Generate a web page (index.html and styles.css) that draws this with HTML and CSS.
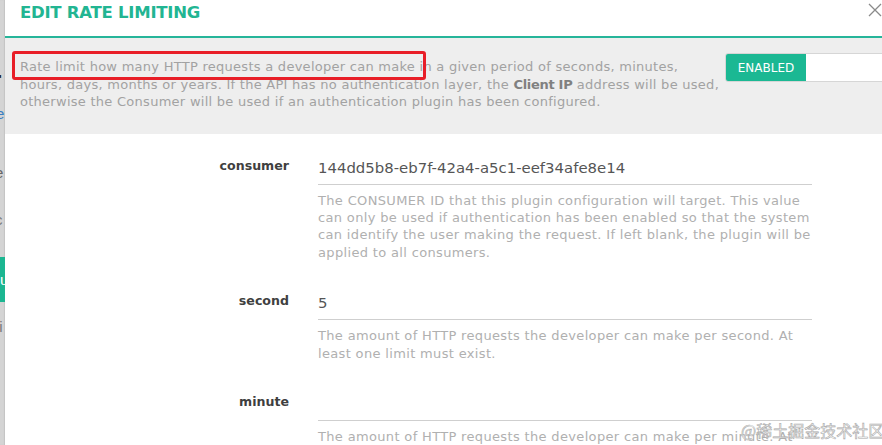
FILE: index.html
```html
<!DOCTYPE html>
<html lang="en">
<head>
<meta charset="utf-8">
<title>Edit Rate Limiting</title>
<link rel="stylesheet" href="styles.css">
</head>
<body>
<div class="page">
  <div class="backdrop">
    <span class="frag frag-r">r</span>
    <span class="frag frag-e1">e</span>
    <span class="frag frag-e2">e</span>
    <span class="frag frag-c">c</span>
    <span class="frag frag-btn">u</span>
    <span class="frag frag-li">li</span>
  </div>
  <div class="modal">
    <div class="modal-header">
      <h1 class="modal-title">EDIT RATE LIMITING</h1>
      <button class="close" aria-label="Close">
        <svg width="14" height="14" viewBox="0 0 14 14"><path d="M1 1 L13 13 M13 1 L1 13" stroke="#8a8a8a" stroke-width="1.3" fill="none"/></svg>
      </button>
    </div>
    <div class="intro">
      <p class="intro-text">Rate limit how many HTTP requests a developer can make in a given period of seconds, minutes, hours, days, months or years. If the API has no authentication layer, the <b>Client IP</b> address will be used, otherwise the Consumer will be used if an authentication plugin has been configured.</p>
      <div class="toggle">
        <span class="toggle-on">ENABLED</span>
        <span class="toggle-off"></span>
      </div>
      <div class="annotation"></div>
    </div>
    <div class="form">
      <div class="row">
        <label class="label">consumer</label>
        <div class="field">
          <div class="input">144dd5b8-eb7f-42a4-a5c1-eef34afe8e14</div>
          <p class="help">The CONSUMER ID that this plugin configuration will target. This value can only be used if authentication has been enabled so that the system can identify the user making the request. If left blank, the plugin will be applied to all consumers.</p>
        </div>
      </div>
      <div class="row">
        <label class="label">second</label>
        <div class="field">
          <div class="input">5</div>
          <p class="help">The amount of HTTP requests the developer can make per second. At least one limit must exist.</p>
        </div>
      </div>
      <div class="row">
        <label class="label">minute</label>
        <div class="field">
          <div class="input"></div>
          <p class="help">The amount of HTTP requests the developer can make per minute. At least one limit must exist.</p>
        </div>
      </div>
    </div>
  </div>
  <div class="watermark">@稀土掘金技术社区</div>
</div>
</body>
</html>
```
FILE: styles.css
```css
html, body {
  margin: 0;
  padding: 0;
  height: 100%;
  overflow: hidden;
  background: #fff;
}
body {
  font-family: "DejaVu Sans", "Noto Sans CJK SC", sans-serif;
}
.page {
  position: relative;
  display: flex;
  width: 882px;
  height: 445px;
  overflow: hidden;
}
.backdrop {
  width: 5px;
  flex: none;
  background: #d4d4d4;
  display: flex;
  flex-direction: column;
  overflow: hidden;
  font-family: "Liberation Sans", sans-serif;
  box-shadow: inset -1px 0 1px rgba(0,0,0,0.08);
}
.frag {
  display: block;
  flex: none;
  white-space: nowrap;
  line-height: 1;
}
.frag-r { margin-top: 68px; font-size: 24px; font-weight: bold; color: #222; margin-left: -8px; }
.frag-e1 { margin-top: 14px; font-size: 15px; color: #3a7fc1; margin-left: -4px; }
.frag-e2 { margin-top: 44px; font-size: 15px; color: #666; margin-left: -5px; }
.frag-c { margin-top: 32px; font-size: 15px; color: #777; margin-left: -5px; }
.frag-btn { margin-top: 30px; height: 45px; background: #1bb691; color: #fff; font-size: 15px; line-height: 45px; width: 20px; margin-left: -6px; padding-left: 6px; }
.frag-li { margin-top: 17px; font-size: 15px; color: #777; margin-left: -4px; }

.modal {
  flex: 1;
  display: flex;
  flex-direction: column;
  background: #fff;
  min-width: 0;
}
.modal > * {
  flex: none;
}
.modal-header {
  display: flex;
  align-items: flex-start;
  justify-content: space-between;
  padding: 3px 0 0 15px;
  box-sizing: border-box;
  border-bottom: 2px solid #26b59a;
  height: 38px;
}
.modal-title {
  margin: 0;
  font-size: 16.5px;
  line-height: 20px;
  font-weight: bold;
  color: #22b592;
  letter-spacing: -0.25px;
}
.close {
  border: 0;
  background: none;
  padding: 0;
  width: 15px;
  height: 16px;
  margin-top: 0;
  display: flex;
  justify-content: flex-end;
}
.intro {
  position: relative;
  background: #eeeeee;
  display: flex;
  align-items: flex-start;
  padding: 20px 0 23px 15px;
}
.intro-text {
  margin: 0;
  width: 703px;
  flex: none;
  font-size: 13px;
  letter-spacing: 0.27px;
  line-height: 17.5px;
  color: #a2a2a2;
}
.intro-text b {
  color: #808080;
  font-weight: bold;
  letter-spacing: -0.3px;
}
.toggle {
  margin-left: 2px;
  margin-top: -5px;
  display: flex;
  height: 29px;
  width: 180px;
  flex: none;
  border: 1px solid #d6d6d6;
  border-radius: 3px;
  overflow: hidden;
  box-sizing: border-box;
}
.toggle-on {
  width: 80px;
  background: #1bb893;
  color: #fff;
  font-size: 12px;
  display: flex;
  align-items: center;
  justify-content: center;
}
.toggle-off {
  flex: 1;
  background: #fff;
}
.annotation {
  position: absolute;
  left: 7px;
  top: 13px;
  width: 408px;
  height: 23px;
  border: 3px solid #e81e27;
  border-radius: 3px;
}
.form {
  padding-top: 17px;
  display: flex;
  flex-direction: column;
  gap: 25px;
}
.row {
  display: grid;
  grid-template-columns: 284px 494px;
  column-gap: 29px;
}
.label {
  text-align: right;
  font-size: 12.6px;
  font-weight: 600;
  color: #3f3f3f;
  line-height: 30px;
}
.input {
  height: 34px;
  line-height: 34px;
  font-size: 14.9px;
  color: #555;
  border-bottom: 1.5px solid #cfcfcf;
  box-sizing: border-box;
}
.help {
  margin: 7px 0 0;
  font-size: 13px;
  letter-spacing: 0.34px;
  line-height: 17.4px;
  color: #b0b0b0;
}
.watermark {
  position: absolute;
  left: 741px;
  top: 418px;
  font-family: "Noto Sans CJK SC", sans-serif;
  font-size: 16px;
  color: rgba(255,255,255,0.85);
  -webkit-text-stroke: 0.6px #a9a9a9;
  white-space: nowrap;
}
```
